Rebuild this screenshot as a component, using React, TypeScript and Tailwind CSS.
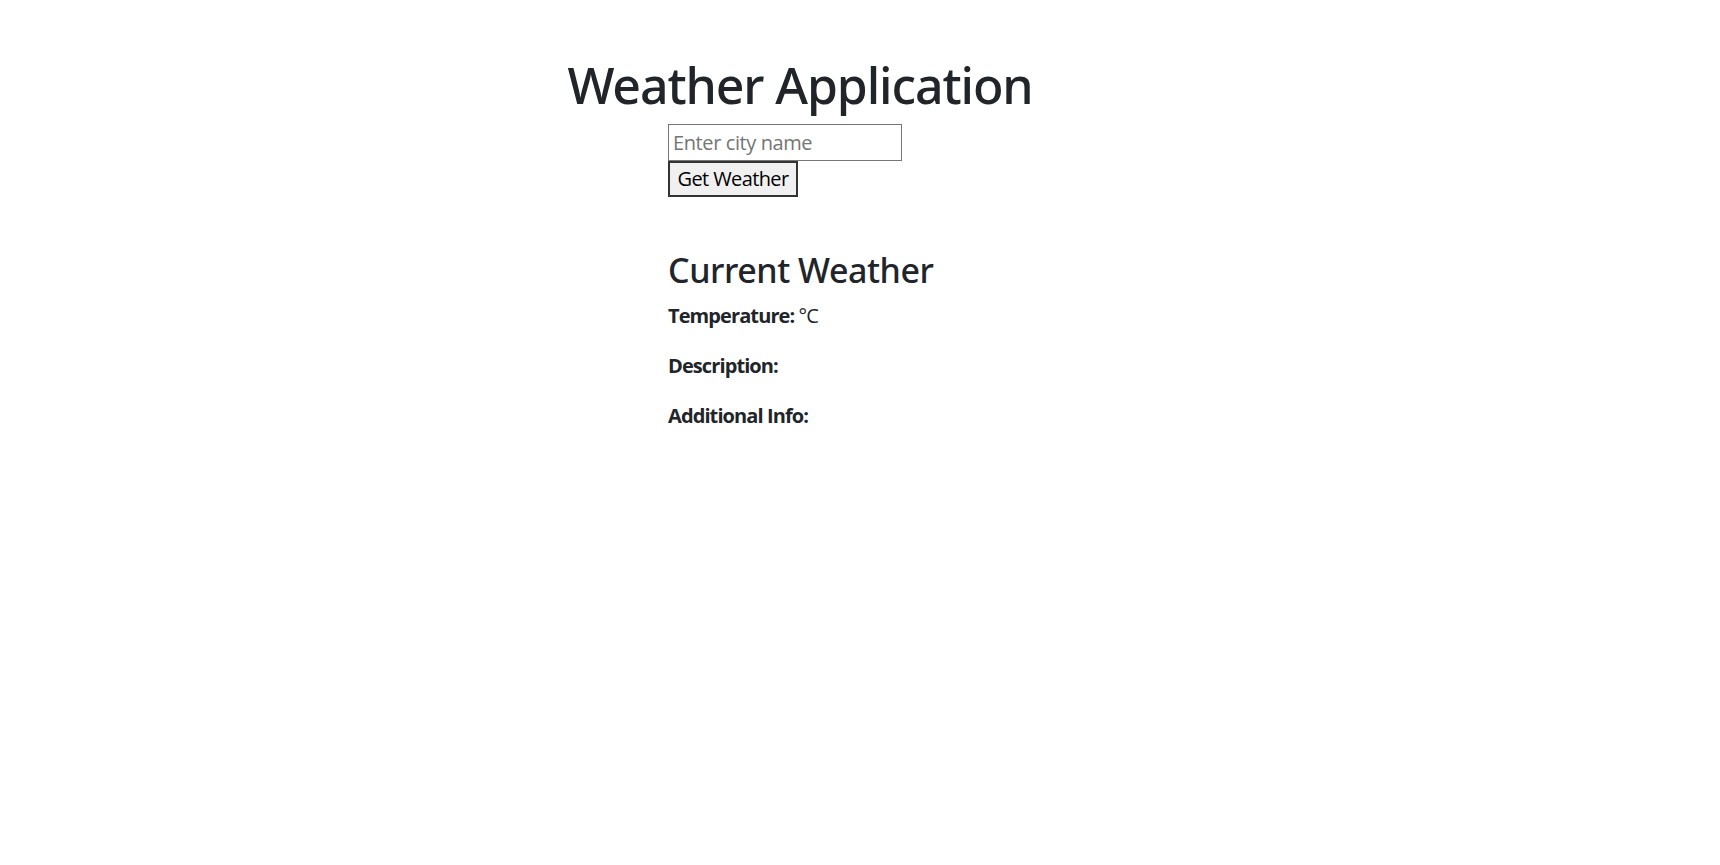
export default function App() {
  return (
    <div className="min-h-screen bg-white text-[#212529] font-['Open_Sans','Noto_Sans',sans-serif]">
      <div className="pt-[55px]">
        <h1 className="w-[1600px] text-center font-['Noto_Sans','Open_Sans',sans-serif] text-[50px] leading-[1.2] font-medium tracking-[-1.1px]">
          Weather Application
        </h1>
        <div className="ml-[668px] mt-[9px] flex flex-col items-start">
          <input
            type="text"
            placeholder="Enter city name"
            className="h-[37px] w-[234px] border border-[#767676] px-[4px] text-[20px] tracking-[-0.4px] text-black placeholder:text-[#757575] outline-none"
          />
          <button
            type="button"
            className="h-[36px] w-[130px] border-2 border-[#333] bg-[#f0f0f0] text-[20px] tracking-[-0.6px] text-black"
          >
            Get Weather
          </button>
          <h2 className="mt-[53px] font-['Noto_Sans','Open_Sans',sans-serif] text-[34px] leading-[1.2] font-medium tracking-[-0.45px]">
            Current Weather
          </h2>
          <div className="mt-[10px] text-[20px] leading-[30px] tracking-[-0.9px]">
            <p className="mb-[20px]">
              <strong className="font-bold">Temperature:</strong> °C
            </p>
            <p className="mb-[20px]">
              <strong className="font-bold">Description:</strong>
            </p>
            <p className="mb-[20px]">
              <strong className="font-bold">Additional Info:</strong>
            </p>
          </div>
        </div>
      </div>
    </div>
  );
}
